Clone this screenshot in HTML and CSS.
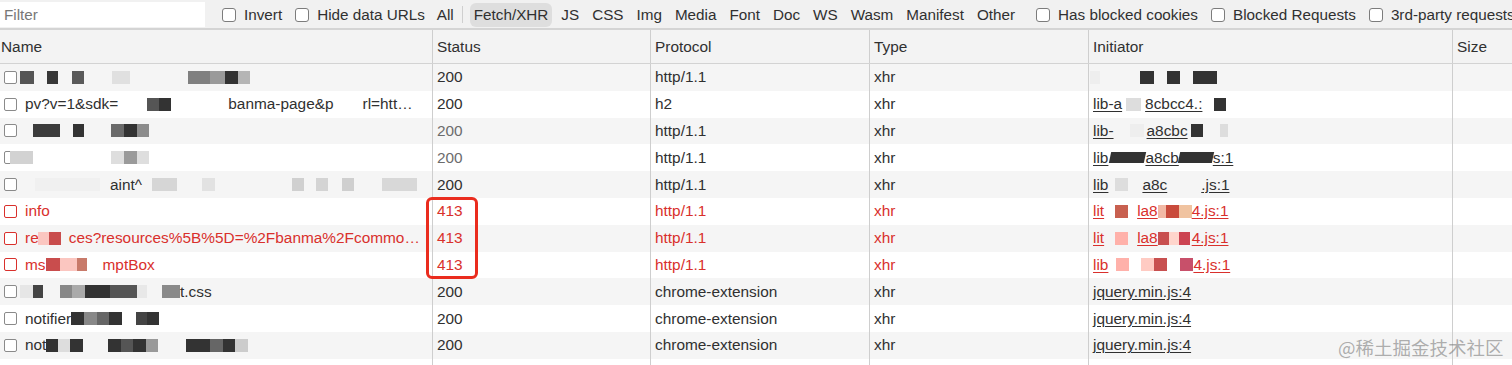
FILE: index.html
```html
<!DOCTYPE html>
<html>
<head>
<meta charset="utf-8">
<link rel="stylesheet" href="styles.css">
</head>
<body>
<div class="page">
  <div class="toolbar">
    <div class="filter">Filter</div>
    <label class="chk first"><span class="box"></span>Invert</label>
    <label class="chk"><span class="box"></span>Hide data URLs</label>
    <span class="btn all">All</span>
    <span class="sep"></span>
    <span class="btn active">Fetch/XHR</span>
    <span class="btn">JS</span>
    <span class="btn">CSS</span>
    <span class="btn">Img</span>
    <span class="btn">Media</span>
    <span class="btn">Font</span>
    <span class="btn">Doc</span>
    <span class="btn">WS</span>
    <span class="btn">Wasm</span>
    <span class="btn">Manifest</span>
    <span class="btn">Other</span>
    <label class="chk first"><span class="box"></span>Has blocked cookies</label>
    <label class="chk"><span class="box"></span>Blocked Requests</label>
    <label class="chk"><span class="box"></span>3rd-party requests</label>
  </div>

  <div class="table">
    <div class="row head">
      <div class="cell name hname">Name</div>
      <div class="cell">Status</div>
      <div class="cell">Protocol</div>
      <div class="cell">Type</div>
      <div class="cell">Initiator</div>
      <div class="cell">Size</div>
    </div>

    <div class="row odd">
      <div class="cell name"><span class="cb"></span><span class="mz n1"></span></div>
      <div class="cell">200</div>
      <div class="cell">http/1.1</div>
      <div class="cell">xhr</div>
      <div class="cell init"><span class="mz i1"></span></div>
      <div class="cell"></div>
    </div>

    <div class="row">
      <div class="cell name"><span class="cb"></span>pv?v=1&amp;sdk=<span class="mz n2a"></span>banma-page&amp;p<span class="mz n2b"></span>rl=htt…</div>
      <div class="cell">200</div>
      <div class="cell">h2</div>
      <div class="cell">xhr</div>
      <div class="cell init"><u>lib-a</u><span class="mz i2a"></span><u>8cbcc4.:</u><span class="mz i2b"></span></div>
      <div class="cell"></div>
    </div>

    <div class="row odd">
      <div class="cell name"><span class="cb"></span><span class="mz n3"></span></div>
      <div class="cell dim">200</div>
      <div class="cell">http/1.1</div>
      <div class="cell">xhr</div>
      <div class="cell init"><u>lib-</u><span class="mz i3a"></span><u>a8cbc</u><span class="mz i3b"></span></div>
      <div class="cell"></div>
    </div>

    <div class="row">
      <div class="cell name"><span class="cb"></span><span class="mz n4"></span></div>
      <div class="cell dim">200</div>
      <div class="cell">http/1.1</div>
      <div class="cell">xhr</div>
      <div class="cell init"><u>lib</u><span class="mz i4a"></span><u>a8cb</u><span class="mz i4b"></span><u>s:1</u></div>
      <div class="cell"></div>
    </div>

    <div class="row odd">
      <div class="cell name"><span class="cb"></span><span class="mz n5a"></span>aint^<span class="mz n5b"></span></div>
      <div class="cell">200</div>
      <div class="cell">http/1.1</div>
      <div class="cell">xhr</div>
      <div class="cell init"><u>lib</u><span class="mz i5a"></span><u>a8c</u><span class="mz i5b"></span><u>.js:1</u></div>
      <div class="cell"></div>
    </div>

    <div class="row err">
      <div class="cell name"><span class="cb"></span>info</div>
      <div class="cell">413</div>
      <div class="cell">http/1.1</div>
      <div class="cell">xhr</div>
      <div class="cell init"><u>lit</u><span class="mz i6a"></span><u>la8</u><span class="mz i6b"></span><u>4.js:1</u></div>
      <div class="cell"></div>
    </div>

    <div class="row odd err">
      <div class="cell name"><span class="cb"></span>re<span class="mz n7"></span>ces?resources%5B%5D=%2Fbanma%2Fcommo…</div>
      <div class="cell">413</div>
      <div class="cell">http/1.1</div>
      <div class="cell">xhr</div>
      <div class="cell init"><u>lit</u><span class="mz i7a"></span><u>la8</u><span class="mz i7b"></span><u>4.js:1</u></div>
      <div class="cell"></div>
    </div>

    <div class="row err">
      <div class="cell name"><span class="cb"></span>ms<span class="mz n8"></span>mptBox</div>
      <div class="cell">413</div>
      <div class="cell">http/1.1</div>
      <div class="cell">xhr</div>
      <div class="cell init"><u>lib</u><span class="mz i8a"></span><u>4.js:1</u></div>
      <div class="cell"></div>
    </div>

    <div class="row odd">
      <div class="cell name"><span class="cb"></span><span class="mz n9"></span>t.css</div>
      <div class="cell">200</div>
      <div class="cell">chrome-extension</div>
      <div class="cell">xhr</div>
      <div class="cell init"><u>jquery.min.js:4</u></div>
      <div class="cell"></div>
    </div>

    <div class="row">
      <div class="cell name"><span class="cb"></span>notifier<span class="mz n10"></span></div>
      <div class="cell">200</div>
      <div class="cell">chrome-extension</div>
      <div class="cell">xhr</div>
      <div class="cell init"><u>jquery.min.js:4</u></div>
      <div class="cell"></div>
    </div>

    <div class="row odd">
      <div class="cell name"><span class="cb"></span>not<span class="mz n11"></span></div>
      <div class="cell">200</div>
      <div class="cell">chrome-extension</div>
      <div class="cell">xhr</div>
      <div class="cell init"><u>jquery.min.js:4</u></div>
      <div class="cell"></div>
    </div>

    <div class="row">
      <div class="cell name"><span class="cb"></span></div>
      <div class="cell"></div>
      <div class="cell"></div>
      <div class="cell"></div>
      <div class="cell"></div>
      <div class="cell"></div>
    </div>
  </div>

  <div class="mark"></div>
  <div class="watermark">@稀土掘金技术社区</div>
</div>
</body>
</html>
```

FILE: styles.css
```css
* { box-sizing: border-box; }
html, body { margin: 0; padding: 0; background: #fff; }
body {
  font-family: "Liberation Sans", Arial, Helvetica, sans-serif;
  font-size: 15.4px;
  color: #303030;
}
.page {
  position: relative;
  width: 1512px;
  height: 365px;
  overflow: hidden;
}

/* toolbar */
.toolbar {
  height: 30px;
  background: #f1f1f1;
  border-bottom: 2px solid #d4d4d4;
  display: flex;
  align-items: center;
  white-space: nowrap;
  padding-top: 1px;
  font-size: 15.25px;
}
.filter {
  width: 205px;
  height: 25px;
  background: #fff;
  color: #777;
  padding-left: 4px;
  display: flex;
  align-items: center;
  flex: none;
}
.chk {
  display: flex;
  align-items: center;
  margin-left: 13px;
  flex: none;
}
.chk.first { margin-left: 17px; }
.box {
  width: 14px;
  height: 14px;
  border: 1px solid #7c7c7c;
  border-radius: 3px;
  background: #fff;
  margin-right: 8px;
  flex: none;
}
.btn {
  padding: 0 4px;
  margin-left: 5px;
  height: 24px;
  display: flex;
  align-items: center;
  border-radius: 6px;
  flex: none;
}
.btn.all { margin-left: 8px; }
.btn.active { background: #dedede; margin-left: 7px; }
.sep {
  width: 1px;
  height: 17px;
  background: #cfcfcf;
  margin-left: 4px;
  flex: none;
}

/* table */
.table { width: 1512px; }
.row {
  display: grid;
  grid-template-columns: 432px 218px 219px 219px 364px 60px;
  height: 26.8px;
  background: #fff;
}
.row.odd { background: #f5f5f5; }
.row.head {
  height: 34px;
  background: #f3f3f3;
  border-bottom: 1px solid #d3d3d3;
}
.cell {
  border-left: 1px solid #cecece;
  padding-left: 4px;
  display: flex;
  align-items: center;
  white-space: nowrap;
  overflow: hidden;
}
.cell.name { border-left: none; padding-left: 4px; }
.cell.hname { padding-left: 1px; }
.cell.dim { color: #6c6c6c; }
.row.err .cell { color: #d9302c; }
.init u { text-decoration: underline; text-underline-offset: 2px; }

.cb {
  width: 13px;
  height: 13px;
  border: 1px solid #8a8a8a;
  border-radius: 2px;
  background: #fff;
  margin-right: 8px;
  flex: none;
}
.row.err .cb { border-color: #d9302c; }

/* pixelated redaction strips */
.mz {
  display: inline-block;
  height: 13px;
  flex: none;
}
.n1 {
  margin-left: -5px; width: 230px;
  background: linear-gradient(90deg, #555 0 14px, transparent 14px 27px, #383838 27px 38px, transparent 38px 52px, #5a5a5a 52px 64px, transparent 64px 92px, #e0e0e0 92px 110px, transparent 110px 168px, #808080 168px 190px, #9a9a9a 190px 205px, #333 205px 218px, #b5b5b5 218px 230px);
}
.n2a {
  width: 110px; background: linear-gradient(90deg, transparent 0 29px, #555 29px 41px, #333 41px 53px, transparent 53px);
}
.n2b { width: 29px; }
.n3 {
  margin-left: 8px; width: 116px;
  background: linear-gradient(90deg, #3c3c3c 0 27px, transparent 27px 40px, #333 40px 51px, transparent 51px 78px, #6a6a6a 78px 91px, #333 91px 104px, #8c8c8c 104px 116px);
}
.n4 {
  margin-left: -15px; width: 139px;
  background: linear-gradient(90deg, #d2d2d2 0 23px, transparent 23px 101px, #dedede 101px 114px, #9a9a9a 114px 127px, #dedede 127px 139px);
}
.n5a {
  width: 85px; background: linear-gradient(90deg, transparent 0 10px, #f0f0f0 10px 75px, transparent 75px);
}
.n5b {
  margin-left: 10px; width: 265px;
  background: linear-gradient(90deg, #d6d6d6 0 25px, transparent 25px 50px, #e2e2e2 50px 63px, transparent 63px 140px, #d0d0d0 140px 152px, transparent 152px 164px, #d4d4d4 164px 176px, transparent 176px 190px, #cfcfcf 190px 202px, transparent 202px 230px, #d8d8d8 230px 253px);
}
.n7 {
  margin-left: -1px; margin-right: 5px; width: 26px;
  background: linear-gradient(90deg, #fbc6c0 0 11px, #c94d4d 11px 23px, transparent 23px);
}
.n8 {
  margin-right: 16px; width: 41px;
  background: linear-gradient(90deg, #c94d4d 0 14px, #fbc6c0 14px 31px, #c87a6a 31px 41px);
}
.n9 {
  margin-left: -5px; width: 160px;
  background: linear-gradient(90deg, #e6e6e6 0 13px, #444 13px 23px, transparent 23px 40px, #888 40px 52px, #aaa 52px 65px, #333 65px 90px, #555 90px 117px, #e8e8e8 117px 127px, transparent 127px 142px, #8a8a8a 142px 160px);
}
.n10 {
  width: 88px;
  background: linear-gradient(90deg, #333 0 13px, #888 13px 26px, #666 26px 38px, #333 38px 51px, transparent 51px 65px, #444 65px 76px, #333 76px 88px);
}
.n11 {
  width: 202px;
  background: linear-gradient(90deg, #333 0 12px, #ddd 12px 24px, #333 24px 37px, transparent 37px 62px, #333 62px 75px, #555 75px 87px, #333 87px 100px, #999 100px 112px, transparent 112px 140px, #333 140px 164px, #666 164px 177px, #333 177px 189px, #ccc 189px 202px);
}

.i1 {
  margin-left: -3px; width: 127px;
  background: linear-gradient(90deg, #eee 0 10px, transparent 10px 50px, #333 50px 64px, transparent 64px 77px, #333 77px 90px, transparent 90px 103px, #333 103px 127px);
}
.i2a { width: 23px; background: linear-gradient(90deg, transparent 0 4px, #ddd 4px 19px, transparent 19px); }
.i2b { margin-left: 12px; width: 12px; background: #333; }
.i3a { width: 33px; background: linear-gradient(90deg, transparent 0 16px, #eee 16px 30px, transparent 30px); }
.i3b { margin-left: 3px; width: 37px; background: linear-gradient(90deg, #333 0 12px, transparent 12px 29px, #ddd 29px 37px); }
.i4a { margin-left: 2px; width: 35px; height: 11px; background: #333; transform: skewX(-12deg); }
.i4b { width: 34px; height: 11px; background: #333; transform: skewX(-12deg); }
.i5a { width: 34px; background: linear-gradient(90deg, transparent 0 7px, #ddd 7px 20px, transparent 20px); }
.i5b { width: 34px; }
.i6a { width: 33px; background: linear-gradient(90deg, transparent 0 11px, #c86050 11px 24px, transparent 24px); }
.i6b { width: 34px; background: linear-gradient(90deg, #f2b9a5 0 8px, #c94b3c 8px 21px, #f0c3a0 21px 34px); }
.i7a { width: 33px; background: linear-gradient(90deg, transparent 0 11px, #ffb1aa 11px 24px, transparent 24px); }
.i7b { width: 34px; background: linear-gradient(90deg, #c84f4f 0 11px, #ffd5cc 11px 21px, #cc4452 21px 32px, transparent 32px); }
.i8a { width: 85px; background: linear-gradient(90deg, transparent 0 8px, #ffb1aa 8px 21px, transparent 21px 33px, #ffcbc3 33px 46px, #c85050 46px 59px, transparent 59px 72px, #c8506a 72px 85px); }

/* overlays */
.mark {
  position: absolute;
  left: 426px;
  top: 197px;
  width: 52px;
  height: 82px;
  border: 3.5px solid #ea2c1e;
  border-radius: 6px;
}
.watermark {
  position: absolute;
  left: 1338px;
  top: 335px;
  font-family: "Noto Sans CJK SC", "Liberation Sans", sans-serif;
  font-size: 18.5px;
  line-height: 24px;
  color: rgba(110, 110, 110, 0.55);
  white-space: nowrap;
}
```
